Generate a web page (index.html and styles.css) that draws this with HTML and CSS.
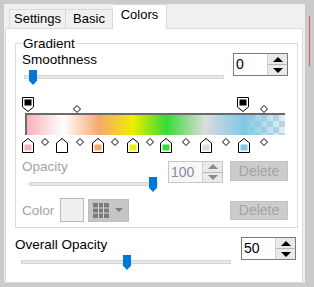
FILE: index.html
```html
<!doctype html>
<html lang="en">
<head>
    <meta charset="UTF-8">
    <title>Colors</title>
    <link rel="stylesheet" href="styles.css">
</head>
<body>
<div class="window">
    <div class="tabs">
        <div class="tab">Settings</div>
        <div class="tab">Basic</div>
        <div class="tab active">Colors</div>
    </div>
    <div class="panel">
        <fieldset class="group">
            <legend>Gradient</legend>

            <div class="row-top">
                <div class="col">
                    <div class="label">Smoothness</div>
                    <div class="slider smooth"><div class="track"></div><div class="thumb" style="left:5px"></div></div>
                </div>
                <div class="spin">
                    <div class="val">0</div>
                    <div class="btns"><span class="up"></span><span class="down"></span></div>
                </div>
            </div>

            <!-- gradient ramp, markers sit at their stop position -->
            <div class="ramp">
                <svg class="mk" style="left:-3px;top:0" width="12" height="15"><path d="M0.5 0.5H11.5V10L6 14.5L0.5 10Z" fill="#fff" stroke="#000"/><rect x="2.5" y="2.5" width="7" height="6" fill="#000"/></svg>
                <svg class="mk" style="left:212px;top:0" width="12" height="15"><path d="M0.5 0.5H11.5V10L6 14.5L0.5 10Z" fill="#fff" stroke="#000"/><rect x="2.5" y="2.5" width="7" height="6" fill="#000"/></svg>
                <svg class="dm" style="left:48px;top:8px" width="8" height="8"><path d="M4 0.5L7.5 4L4 7.5L0.5 4Z" fill="#fff" stroke="#000"/></svg>
                <svg class="dm" style="left:235px;top:8px" width="8" height="8"><path d="M4 0.5L7.5 4L4 7.5L0.5 4Z" fill="#fff" stroke="#000"/></svg>

                <div class="bar"></div>

                <svg class="mk" style="left:-3px;top:41px" width="12" height="15"><path d="M6 0.5L11.5 5V14.5H0.5V5Z" fill="#fff" stroke="#000"/><rect x="2.5" y="6.5" width="7" height="6" fill="#f7b3bb"/></svg>
                <svg class="mk" style="left:31px;top:41px" width="12" height="15"><path d="M6 0.5L11.5 5V14.5H0.5V5Z" fill="#fff" stroke="#000"/><rect x="2.5" y="6.5" width="7" height="6" fill="#fff"/></svg>
                <svg class="mk" style="left:67px;top:41px" width="12" height="15"><path d="M6 0.5L11.5 5V14.5H0.5V5Z" fill="#fff" stroke="#000"/><rect x="2.5" y="6.5" width="7" height="6" fill="#f6a86c"/></svg>
                <svg class="mk" style="left:102px;top:41px" width="12" height="15"><path d="M6 0.5L11.5 5V14.5H0.5V5Z" fill="#fff" stroke="#000"/><rect x="2.5" y="6.5" width="7" height="6" fill="#eeee00"/></svg>
                <svg class="mk" style="left:135px;top:41px" width="12" height="15"><path d="M6 0.5L11.5 5V14.5H0.5V5Z" fill="#fff" stroke="#000"/><rect x="2.5" y="6.5" width="7" height="6" fill="#35dc35"/></svg>
                <svg class="mk" style="left:175px;top:41px" width="12" height="15"><path d="M6 0.5L11.5 5V14.5H0.5V5Z" fill="#fff" stroke="#000"/><rect x="2.5" y="6.5" width="7" height="6" fill="#dcdcdc"/></svg>
                <svg class="mk" style="left:213px;top:41px" width="12" height="15"><path d="M6 0.5L11.5 5V14.5H0.5V5Z" fill="#fff" stroke="#000"/><rect x="2.5" y="6.5" width="7" height="6" fill="#80c8e6"/></svg>

                <svg class="dm" style="left:16px;top:41px" width="8" height="8"><path d="M4 0.5L7.5 4L4 7.5L0.5 4Z" fill="#fff" stroke="#000"/></svg>
                <svg class="dm" style="left:51px;top:41px" width="8" height="8"><path d="M4 0.5L7.5 4L4 7.5L0.5 4Z" fill="#fff" stroke="#000"/></svg>
                <svg class="dm" style="left:86px;top:41px" width="8" height="8"><path d="M4 0.5L7.5 4L4 7.5L0.5 4Z" fill="#fff" stroke="#000"/></svg>
                <svg class="dm" style="left:121px;top:41px" width="8" height="8"><path d="M4 0.5L7.5 4L4 7.5L0.5 4Z" fill="#fff" stroke="#000"/></svg>
                <svg class="dm" style="left:157px;top:41px" width="8" height="8"><path d="M4 0.5L7.5 4L4 7.5L0.5 4Z" fill="#fff" stroke="#000"/></svg>
                <svg class="dm" style="left:197px;top:41px" width="8" height="8"><path d="M4 0.5L7.5 4L4 7.5L0.5 4Z" fill="#fff" stroke="#000"/></svg>
                <svg class="dm" style="left:235px;top:41px" width="8" height="8"><path d="M4 0.5L7.5 4L4 7.5L0.5 4Z" fill="#fff" stroke="#000"/></svg>
            </div>

            <div class="row-opacity">
                <div class="col">
                    <div class="label off">Opacity</div>
                    <div class="slider op"><div class="track"></div><div class="thumb" style="left:120px"></div></div>
                </div>
                <div class="spin off">
                    <div class="val">100</div>
                    <div class="btns"><span class="up"></span><span class="down"></span></div>
                </div>
                <div class="btn">Delete</div>
            </div>

            <div class="row-color">
                <div class="label off">Color</div>
                <div class="swatch"></div>
                <div class="drop">
                    <svg width="16" height="15"><rect x="0" y="0" width="16" height="15" fill="#7b7b7b"/><path d="M5.5 0V15M10.5 0V15M0 5H16M0 10H16" stroke="#d2d2d2"/></svg>
                    <span class="caret"></span>
                </div>
                <div class="btn">Delete</div>
            </div>
        </fieldset>

        <div class="row-overall">
            <div class="col">
                <div class="label">Overall Opacity</div>
                <div class="slider all"><div class="track"></div><div class="thumb" style="left:102px"></div></div>
            </div>
            <div class="spin big">
                <div class="val">50</div>
                <div class="btns"><span class="up"></span><span class="down"></span></div>
            </div>
        </div>
    </div>
</div>
</body>
</html>
```
FILE: styles.css
```css
body{
    margin:0;
    background-color:#cbcbcb;
    font-family:"Liberation Sans", Arial, sans-serif;
    font-size:13px;
    color:#000;
}
body::after{
    content:"";
    position:absolute;
    left:309px;
    top:16px;
    width:1px;
    height:50px;
    background-color:#e8504a;
}

.window{
    margin:4px 0 0 4px;
    width:301px;
    height:279px;
    background-color:#f0f0f0;
    display:flex;
    flex-direction:column;
}

/* tabs */
.tabs{
    display:flex;
    align-items:flex-end;
    height:24px;
    padding-left:5px;
}
.tab{
    box-sizing:border-box;
    height:19px;
    line-height:17px;
    border:1px solid #d9d9d9;
    border-bottom:none;
    background-color:#f0f0f0;
    text-align:center;
}
.tab:nth-child(1){ width:57px; }
.tab:nth-child(2){ width:47px; border-left:none; }
.tab.active{
    width:54px;
    height:25px;
    line-height:19px;
    margin-bottom:-1px;
    background-color:#fff;
    border-left:none;
    position:relative;
    z-index:1;
}

.panel{
    margin-left:1px;
    width:298px;
    height:255px;
    box-sizing:border-box;
    background-color:#fff;
    border:1px solid #d9d9d9;
}

/* group box */
.group{
    margin:7px 0 0 9px;
    width:283px;
    box-sizing:border-box;
    border:1px solid #dcdcdc;
    padding:1px 9px 5px 6px;
    min-width:0;
}
.group legend{
    padding:0 1px;
    line-height:15px;
    font-size:13.5px;
}

.label{
    line-height:15px;
    font-size:13.5px;
}
.label.off{ color:#a3a3a3; }

/* sliders */
.slider{
    position:relative;
    height:15px;
}
.slider .track{
    position:absolute;
    left:0;
    right:0;
    top:5px;
    height:4px;
    box-sizing:border-box;
    background-color:#e7e7e7;
    border:1px solid #d6d6d6;
}
.slider .thumb{
    position:absolute;
    top:0;
    width:8px;
    height:15px;
    background-color:#0078d7;
    clip-path:polygon(0 0,100% 0,100% 72%,50% 100%,0 72%);
}
.slider.smooth{ margin:3px 0 0 2px; }
.slider.op{ margin:3px 3px 0 7px; }
.slider.all{ margin:3px 0 0 6px; }

/* spin boxes */
.spin{
    display:flex;
    height:23px;
    box-sizing:border-box;
    border:1px solid #7a7a7a;
    background-color:#fff;
}
.spin .val{
    flex:1;
    padding-left:2px;
    font-size:14px;
    line-height:21px;
}
.spin .btns{
    width:19px;
    display:flex;
    flex-direction:column;
    background-color:#e9e9e9;
    border-left:1px solid #d0d0d0;
}
.spin .btns span{
    flex:1;
    display:flex;
    align-items:center;
    justify-content:center;
}
.spin .btns span.up{ border-bottom:1px solid #b8b8b8; }
.spin .up::before{
    content:"";
    border-left:5px solid transparent;
    border-right:5px solid transparent;
    border-bottom:5px solid #000;
}
.spin .down::before{
    content:"";
    border-left:5px solid transparent;
    border-right:5px solid transparent;
    border-top:5px solid #000;
}
.spin.off{
    height:22px;
    border-color:#c6c6c6;
    background-color:#f7f7f7;
}
.spin.off .val{ color:#8c8ca0; line-height:20px; }
.spin.off .up::before{ border-bottom-color:#8a8a8a; }
.spin.off .down::before{ border-top-color:#8a8a8a; }
.spin.big{ height:23px; }

.btn{
    width:58px;
    height:20px;
    box-sizing:border-box;
    background-color:#cccccc;
    border:1px solid #c2c2c2;
    color:#a3a3a3;
    font-size:14px;
    line-height:18px;
    text-align:center;
}

/* rows */
.row-top{
    display:grid;
    grid-template-columns:1fr 55px;
    column-gap:9px;
}
.row-top .spin{ margin-top:1px; }

.ramp{
    position:relative;
    height:56px;
    box-sizing:border-box;
    padding-top:16px;
    margin:12px 3px 0 3px;
}
.ramp .mk, .ramp .dm{ position:absolute; }
.ramp .bar{
    height:22px;
    box-sizing:border-box;
    border-top:2px solid #6a6a6a;
    border-left:2px solid #6a6a6a;
    background:
        linear-gradient(to right,#f7b3bb 0%,#f8bcc3 2%,#ffffff 14%,#f6a86c 28%,#eeee00 41%,#35dc35 54%,#dcdcdc 69%,#80c8e6 84%,rgba(128,200,230,.25) 100%),
        conic-gradient(#d8d8d8 25%,#fff 0 50%,#d8d8d8 0 75%,#fff 0) 0 0/12px 12px;
}

.row-opacity{
    display:grid;
    grid-template-columns:1fr 55px 58px;
    column-gap:7px;
    margin-top:6px;
}
.row-opacity .spin, .row-opacity .btn{ margin-top:2px; }

.row-color{
    display:flex;
    align-items:center;
    margin-top:6px;
}
.row-color .label{ width:38px; }
.swatch{
    width:24px;
    height:24px;
    box-sizing:border-box;
    border:1px solid #b9b9b9;
    background-color:#efefef;
}
.drop{
    margin-left:4px;
    width:41px;
    height:23px;
    box-sizing:border-box;
    background-color:#c6c6c6;
    border:1px solid #bdbdbd;
    display:flex;
    align-items:center;
    padding-left:4px;
}
.drop .caret{
    margin-left:6px;
    border-left:4px solid transparent;
    border-right:4px solid transparent;
    border-top:4px solid #7a7a7a;
}
.row-color .btn{ margin-left:auto; height:19px; line-height:17px; }

.row-overall{
    display:grid;
    grid-template-columns:1fr 55px;
    column-gap:10px;
    margin:9px 6px 0 9px;
}
.row-overall .spin{ margin-top:0; }
```
